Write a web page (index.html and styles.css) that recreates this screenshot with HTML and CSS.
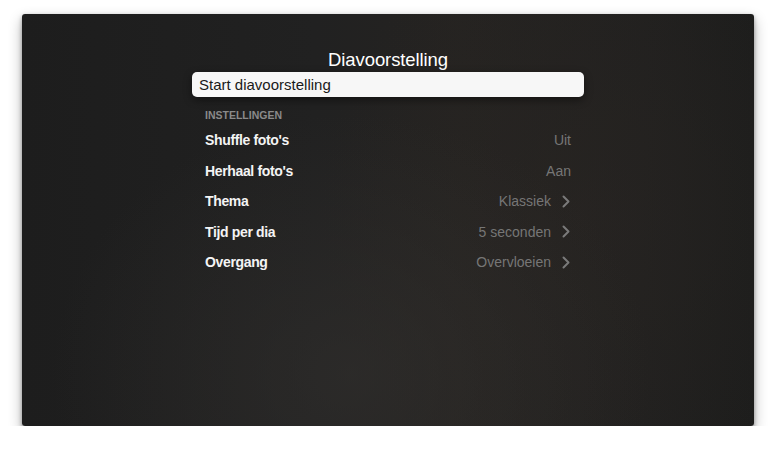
FILE: index.html
```html
<!DOCTYPE html>
<html lang="nl">
<head>
<meta charset="utf-8">
<title>Diavoorstelling</title>
<link rel="stylesheet" href="styles.css">
</head>
<body>
<div class="screen">
  <div class="column">
    <h1 class="title">Diavoorstelling</h1>
    <div class="button">Start diavoorstelling</div>
    <div class="section">INSTELLINGEN</div>
    <ul class="rows">
      <li class="row"><span class="label">Shuffle foto's</span><span class="value">Uit</span></li>
      <li class="row"><span class="label">Herhaal foto's</span><span class="value">Aan</span></li>
      <li class="row"><span class="label">Thema</span><span class="value">Klassiek<svg class="chev" width="8" height="13" viewBox="0 0 8 13"><path d="M1.5 1.5 L6.5 6.5 L1.5 11.5" fill="none" stroke="#7a7a7a" stroke-width="2" stroke-linecap="round" stroke-linejoin="round"/></svg></span></li>
      <li class="row"><span class="label">Tijd per dia</span><span class="value">5 seconden<svg class="chev" width="8" height="13" viewBox="0 0 8 13"><path d="M1.5 1.5 L6.5 6.5 L1.5 11.5" fill="none" stroke="#7a7a7a" stroke-width="2" stroke-linecap="round" stroke-linejoin="round"/></svg></span></li>
      <li class="row"><span class="label">Overgang</span><span class="value">Overvloeien<svg class="chev" width="8" height="13" viewBox="0 0 8 13"><path d="M1.5 1.5 L6.5 6.5 L1.5 11.5" fill="none" stroke="#7a7a7a" stroke-width="2" stroke-linecap="round" stroke-linejoin="round"/></svg></span></li>
    </ul>
  </div>
</div>
</body>
</html>
```
FILE: styles.css
```css
html, body {
  margin: 0;
  padding: 0;
  background: #ffffff;
  font-family: "Liberation Sans", Arial, sans-serif;
}
body {
  padding: 14px 22px 0 22px;
}
.screen {
  width: 732px;
  height: 412px;
  box-sizing: border-box;
  border-radius: 3px;
  background:
    radial-gradient(ellipse 300px 260px at 330px 360px, rgba(50,48,46,0.6), rgba(40,38,36,0) 100%),
    radial-gradient(ellipse 260px 300px at 560px 200px, rgba(42,38,35,0.5), rgba(40,36,33,0) 100%),
    linear-gradient(90deg, #1d1d1d 0%, #212121 40%, #252321 60%, #21201f 85%, #1d1d1c 100%);
  box-shadow: 0 6px 14px rgba(0,0,0,0.3), 0 2px 4px rgba(0,0,0,0.35);
  display: flex;
  justify-content: center;
  padding-top: 35px;
}
.column {
  width: 392px;
  display: flex;
  flex-direction: column;
}
.title {
  margin: 0 0 1px 0;
  font-size: 18.5px;
  font-weight: normal;
  line-height: 22px;
  letter-spacing: -0.1px;
  color: #ffffff;
  text-align: center;
}
.button {
  height: 25px;
  box-sizing: border-box;
  background: #f7f7f7;
  border-radius: 5px;
  padding-left: 7px;
  font-size: 15px;
  line-height: 25px;
  color: #1a1a1a;
  box-shadow: 0 3px 8px rgba(0,0,0,0.45);
}
.section {
  margin: 11px 13px 3px 13px;
  font-size: 10.5px;
  font-weight: bold;
  line-height: 14px;
  color: #8a8a8a;
}
.rows {
  list-style: none;
  margin: 0 13px;
  padding: 0;
}
.row {
  height: 30.5px;
  display: flex;
  justify-content: space-between;
  align-items: center;
}
.label {
  font-size: 14px;
  font-weight: bold;
  letter-spacing: -0.35px;
  color: #f4f4f4;
}
.value {
  display: flex;
  align-items: center;
  font-size: 14px;
  color: #767676;
}
.chev {
  margin-left: 11px;
  margin-right: 1px;
}
```
